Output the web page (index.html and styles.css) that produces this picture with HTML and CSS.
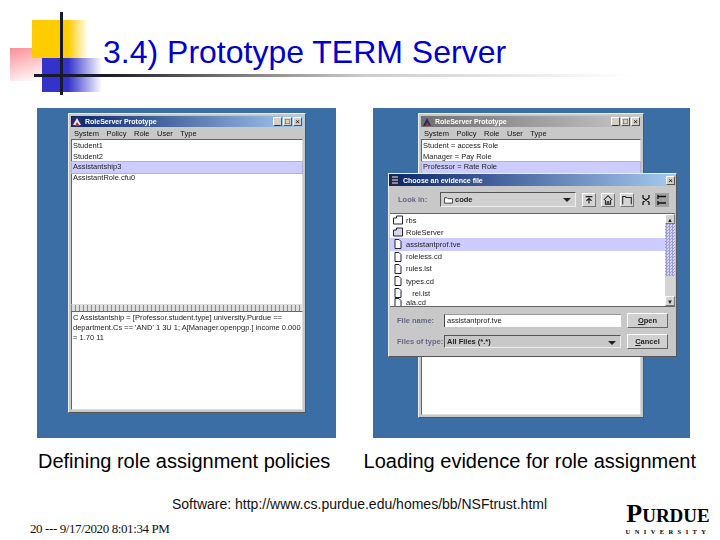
FILE: index.html
```html
<!DOCTYPE html>
<html lang="en">
<head>
    <meta charset="UTF-8">
    <title>3.4) Prototype TERM Server</title>
    <link rel="stylesheet" href="styles.css">
</head>
<body>
<div class="slide">
    <!-- corner decoration -->
    <div class="deco">
        <div class="deco-pink"></div>
        <div class="deco-yellow"></div>
        <div class="deco-blue"></div>
        <div class="deco-vline"></div>
    </div>
    <div class="deco-hline"></div>

    <h1 class="title">3.4) Prototype TERM Server</h1>

    <div class="shots">
        <div class="panel panel-left">
            <div class="win">
                <div class="titlebar">
                    <svg class="app-icon" viewBox="0 0 10 10"><rect width="10" height="10" fill="#2a2a66"/><path d="M1 8L5 1l4 7z" fill="#e8e8f0"/><path d="M3 9l2-4 3 4z" fill="#b03030"/></svg>
                    <span class="titlebar-text">RoleServer Prototype</span>
                    <span class="winbtn">_</span><span class="winbtn">□</span><span class="winbtn">×</span>
                </div>
                <div class="menubar"><span>System</span><span>Policy</span><span>Role</span><span>User</span><span>Type</span></div>
                <div class="list list-top">
                    <div class="row">Student1</div>
                    <div class="row">Student2</div>
                    <div class="row row-sel">Assistantship3</div>
                    <div class="row">AssistantRole.cfu0</div>
                </div>
                <div class="divider"></div>
                <div class="list list-bottom">
                    <div class="note">C Assistantship = [Professor.student.type] university.Purdue ==<br>department.Cs == 'AND' 1 3U 1; A[Manager.openpgp.] income 0.000<br>= 1.70 11</div>
                </div>
            </div>
        </div>

        <div class="panel panel-right">
            <div class="win win-back">
                <div class="titlebar titlebar-grey">
                    <svg class="app-icon" viewBox="0 0 10 10"><path d="M1 9L5 1l4 8z" fill="#222a66"/><path d="M3 9l2-4 3 4z" fill="#a03040"/></svg>
                    <span class="titlebar-text">RoleServer Prototype</span>
                    <span class="winbtn">_</span><span class="winbtn">□</span><span class="winbtn">×</span>
                </div>
                <div class="menubar"><span>System</span><span>Policy</span><span>Role</span><span>User</span><span>Type</span></div>
                <div class="list list-back">
                    <div class="row">Student = access Role</div>
                    <div class="row">Manager = Pay Role</div>
                    <div class="row row-sel">Professor = Rate Role</div>
                </div>
            </div>

            <div class="dialog">
                <div class="titlebar dialog-title">
                    <svg class="app-icon" viewBox="0 0 10 10"><rect width="10" height="10" fill="#22264a"/><path d="M2 2h6M2 5h6M2 8h6" stroke="#eee" stroke-width="1.2"/></svg>
                    <span class="titlebar-text">Choose an evidence file</span>
                    <span class="winbtn">×</span>
                </div>
                <div class="lookin">
                    <span class="field-label">Look in:</span>
                    <div class="combo">
                        <svg class="folder" viewBox="0 0 10 8"><path d="M.5 7.5v-6h3l1 1h5v5z" fill="#fff" stroke="#333"/></svg>
                        <span>code</span><i class="arrow"></i>
                    </div>
                    <span class="tool"><svg viewBox="0 0 14 14"><path d="M3 3h8M7 11V5M4 8l3-3 3 3" fill="none" stroke="#222" stroke-width="1.4"/></svg></span>
                    <span class="tool"><svg viewBox="0 0 14 14"><path d="M2 7l5-5 5 5M4 7v5h6V7M6 12V9h2v3" fill="none" stroke="#222" stroke-width="1.2"/></svg></span>
                    <span class="tool"><svg viewBox="0 0 14 14"><path d="M2 12V3h3l1 1h6v8" fill="none" stroke="#222" stroke-width="1.2"/></svg></span>
                    <span class="tool tool-flat"><svg viewBox="0 0 14 14"><path d="M4 2v3M10 2v3M4 9v3M10 9v3M4 5l6 4M10 5l-6 4" fill="none" stroke="#111" stroke-width="1.3"/></svg></span>
                    <span class="tool tool-flat tool-on"><svg viewBox="0 0 14 14"><path d="M3 2v4M3 8v4M3 3.5h8M3 10h8" fill="none" stroke="#111" stroke-width="1.3"/></svg></span>
                </div>
                <div class="filepane">
                    <div class="files">
                        <div class="file"><svg class="file-ico" viewBox="0 0 10 10"><path d="M.5 9V3h3V1h6v8z" fill="#fff" stroke="#223"/></svg>rbs</div>
                        <div class="file"><svg class="file-ico" viewBox="0 0 10 10"><path d="M.5 9V3h3V1h6v8z" fill="#d8d8e8" stroke="#223"/></svg>RoleServer</div>
                        <div class="file file-sel"><svg class="file-ico" viewBox="0 0 10 10"><path d="M2 .5h4l2 2v7H2z" fill="#fff" stroke="#223"/></svg>assistantprof.tve</div>
                        <div class="file"><svg class="file-ico" viewBox="0 0 10 10"><path d="M2 .5h4l2 2v7H2z" fill="#fff" stroke="#223"/></svg>roleless.cd</div>
                        <div class="file"><svg class="file-ico" viewBox="0 0 10 10"><path d="M2 .5h4l2 2v7H2z" fill="#fff" stroke="#223"/></svg>rules.lst</div>
                        <div class="file"><svg class="file-ico" viewBox="0 0 10 10"><path d="M2 .5h4l2 2v7H2z" fill="#fff" stroke="#223"/></svg>types.cd</div>
                        <div class="file"><svg class="file-ico" viewBox="0 0 10 10"><path d="M2 .5h4l2 2v7H2z" fill="#fff" stroke="#223"/></svg>   rel.lst</div>
                        <div class="file file-last"><svg class="file-ico" viewBox="0 0 10 10"><path d="M2 .5h4l2 2v7H2z" fill="#fff" stroke="#223"/></svg>ala.cd</div>
                    </div>
                    <div class="scroll">
                        <span class="scroll-btn">▲</span>
                        <span class="scroll-thumb"></span>
                        <span class="scroll-track"></span>
                        <span class="scroll-btn">▼</span>
                    </div>
                </div>
                <div class="form-row">
                    <span class="form-label">File name:</span>
                    <div class="input">assistantprof.tve</div>
                    <div class="btn"><u>O</u>pen</div>
                </div>
                <div class="form-row">
                    <span class="form-label">Files of type:</span>
                    <div class="input input-combo">All Files (*.*)<i class="arrow"></i></div>
                    <div class="btn"><u>C</u>ancel</div>
                </div>
            </div>
        </div>
    </div>

    <div class="captions">
        <p class="cap-left">Defining role assignment policies</p>
        <p class="cap-right">Loading evidence for role assignment</p>
    </div>

    <p class="software">Software: http://www.cs.purdue.edu/homes/bb/NSFtrust.html</p>

    <div class="bottom">
        <span class="stamp">20 --- 9/17/2020 8:01:34 PM</span>
        <div class="purdue">
            <div class="purdue-name">P<small>URDUE</small></div>
            <div class="purdue-sub">UNIVERSITY</div>
        </div>
    </div>
</div>
</body>
</html>
```

FILE: styles.css
```css
* {
    box-sizing: border-box;
}

html, body {
    margin: 0;
    padding: 0;
    background: #fff;
}

.slide {
    position: relative;
    width: 720px;
    height: 540px;
    overflow: hidden;
    font-family: "Liberation Sans", Arial, sans-serif;
}

/* corner decoration */
.deco {
    position: absolute;
    left: 0;
    top: 0;
    width: 110px;
    height: 100px;
}

.deco-pink {
    position: absolute;
    left: 10px;
    top: 48px;
    width: 34px;
    height: 33px;
    background: linear-gradient(165deg, #fb8f98 0%, #fdc8cc 50%, #fff 100%);
}

.deco-yellow {
    position: absolute;
    left: 32px;
    top: 20px;
    width: 56px;
    height: 38px;
    background: linear-gradient(90deg, #ffcc00 0, #ffcc00 36px, #fff 100%);
}

.deco-blue {
    position: absolute;
    left: 42px;
    top: 58px;
    width: 60px;
    height: 34px;
    background: linear-gradient(90deg, #3333cc 0, #3333cc 26px, #fff 100%);
}

.deco-vline {
    position: absolute;
    left: 60px;
    top: 12px;
    width: 3px;
    height: 83px;
    background: #1a1a2e;
}

.deco-hline {
    position: absolute;
    left: 34px;
    top: 74px;
    width: 600px;
    height: 3px;
    background: linear-gradient(90deg, #1a1a2e 0, #1a1a2e 12%, #777 33%, #ccc 55%, #fff 100%);
}

.title {
    position: absolute;
    left: 103px;
    top: 34px;
    margin: 0;
    font-size: 32px;
    line-height: 36px;
    font-weight: normal;
    color: #0000cc;
    white-space: nowrap;
}

/* screenshots */
.shots {
    position: absolute;
    left: 37px;
    top: 108px;
    display: flex;
    gap: 37px;
}

.panel {
    position: relative;
    height: 330px;
    background: #3a6ea5;
}

.panel-left {
    width: 299px;
    padding: 5px 30px 0 31px;
}

.panel-right {
    width: 317px;
    padding: 5px 46px 0 45px;
}

.win {
    display: flex;
    flex-direction: column;
    height: 300px;
    padding: 2px;
    background: #c8c8c8;
    border: 1px solid #eee;
    border-right-color: #555;
    border-bottom-color: #555;
    filter: blur(0.35px);
}

.win-back {
    height: 305px;
}

.titlebar {
    display: flex;
    align-items: center;
    gap: 1px;
    height: 11px;
    padding: 0 1px;
    flex: none;
    color: #fff;
    background: linear-gradient(90deg, #0a246a, #a6caf0);
}

.titlebar-grey {
    background: linear-gradient(90deg, #707070, #c8c8c8);
}

.titlebar-text {
    flex: 1;
    margin-left: 2px;
    font-size: 7px;
    font-weight: bold;
    white-space: nowrap;
}

.app-icon {
    width: 10px;
    height: 10px;
    flex: none;
}

.winbtn {
    width: 9px;
    height: 9px;
    flex: none;
    font-size: 8px;
    line-height: 8px;
    text-align: center;
    color: #000;
    background: #d4d0c8;
    border: 1px solid #fff;
    border-right-color: #555;
    border-bottom-color: #555;
}

.menubar {
    display: flex;
    gap: 7.5px;
    height: 12px;
    flex: none;
    padding-left: 3px;
    font-size: 7.5px;
    line-height: 13px;
    color: #111;
}

.list {
    background: #fff;
    border: 1px solid #666;
    border-right-color: #ddd;
    border-bottom-color: #ddd;
    font-size: 7.5px;
    color: #222;
}

.list-top {
    height: 167px;
    padding-top: 1px;
}

.list-back {
    flex: 1;
    padding-top: 1px;
}

.list-bottom {
    height: 99px;
    padding: 1px;
}

.row {
    height: 10.6px;
    line-height: 10.6px;
    padding-left: 1px;
    white-space: nowrap;
}

.row-sel {
    background: #ccccff;
    box-shadow: 0 0 0 1px #b0b0d8;
}

.note {
    line-height: 10px;
    white-space: nowrap;
    overflow: hidden;
}

.divider {
    height: 6px;
    flex: none;
    background: repeating-linear-gradient(90deg, #888 0, #888 1px, #ddd 1px, #ddd 4px);
}

/* file chooser over the window */
.dialog {
    position: absolute;
    left: 15px;
    top: 65px;
    width: 289px;
    height: 184px;
    background: #c8c8c8;
    border: 1px solid #eee;
    border-right-color: #555;
    border-bottom-color: #555;
    color: #222;
    filter: blur(0.35px);
}

.dialog-title {
    height: 12px;
    background: linear-gradient(90deg, #0a246a, #a6caf0);
}

.lookin {
    display: flex;
    align-items: center;
    gap: 5px;
    height: 27px;
    padding: 0 4px 0 9px;
}

.field-label {
    width: 37px;
    font-size: 7.5px;
    font-weight: bold;
    color: #666688;
}

.combo {
    position: relative;
    display: flex;
    align-items: center;
    gap: 2px;
    width: 136px;
    height: 15px;
    padding-left: 3px;
    margin-right: 1px;
    font-size: 7.5px;
    font-weight: bold;
    background: #d0d0d0;
    border: 1px solid #555;
    border-right-color: #eee;
    border-bottom-color: #eee;
}

.folder {
    width: 9px;
    height: 8px;
}

.arrow {
    position: absolute;
    right: 4px;
    top: 5px;
    border-left: 4px solid transparent;
    border-right: 4px solid transparent;
    border-top: 4px solid #222;
}

.tool {
    width: 14px;
    height: 14px;
    flex: none;
    background: #d4d4d4;
    border: 1px solid #fff;
    border-right-color: #777;
    border-bottom-color: #777;
}

.tool svg {
    display: block;
    width: 100%;
    height: 100%;
}

.tool-flat {
    border: 0;
    background: none;
}

.tool-on {
    background: #a0a0a0;
    margin-left: -3px;
}

.filepane {
    display: flex;
    height: 94px;
    margin: 0 1px;
    border-top: 1px solid #666;
    border-bottom: 1px solid #666;
    background: #fff;
}

.files {
    flex: 1;
    overflow: hidden;
    font-size: 7.5px;
}

.file {
    display: flex;
    align-items: center;
    gap: 3px;
    height: 12.2px;
    padding-left: 3px;
    white-space: pre;
}

.file-last {
    height: 7px;
}

.file-sel {
    background: #ccccff;
}

.file-ico {
    width: 10px;
    height: 10px;
    flex: none;
}

.scroll {
    display: flex;
    flex-direction: column;
    width: 10px;
    background: #d4d4d4;
}

.scroll-btn {
    height: 10px;
    font-size: 6px;
    line-height: 10px;
    text-align: center;
    background: #d4d4d4;
    border: 1px solid #fff;
    border-right-color: #777;
    border-bottom-color: #777;
}

.scroll-thumb {
    height: 52px;
    background: repeating-conic-gradient(#9c9cd8 0 25%, #d8d8f0 0 50%) 0 0 / 3px 3px;
}

.scroll-track {
    flex: 1;
}

.form-row {
    display: flex;
    align-items: center;
    height: 21px;
    padding-left: 8px;
    font-size: 7.5px;
}

.filepane + .form-row {
    margin-top: 3px;
}

.form-label {
    width: 47px;
    color: #666688;
    font-weight: bold;
}

.input {
    position: relative;
    width: 177px;
    height: 13px;
    line-height: 12px;
    padding-left: 2px;
    background: #fff;
    border-left: 1px solid #444;
    border-top: 1px solid #999;
}

.input-combo {
    font-weight: bold;
    background: #c8c8c8;
    border: 1px solid #555;
    border-right-color: #eee;
    border-bottom-color: #eee;
}

.btn {
    width: 41px;
    height: 15px;
    margin-left: 6px;
    line-height: 13px;
    text-align: center;
    font-weight: bold;
    background: #d0d0d0;
    border: 1px solid #fff;
    border-right-color: #666;
    border-bottom-color: #666;
}

/* text under the screenshots */
.captions {
    position: absolute;
    left: 38px;
    top: 450px;
    width: 658px;
    display: flex;
    justify-content: space-between;
}

.captions p {
    margin: 0;
    font-size: 20px;
    line-height: 22px;
    color: #000;
    white-space: nowrap;
}

.software {
    position: absolute;
    left: 172px;
    top: 496px;
    margin: 0;
    font-size: 14px;
    line-height: 16px;
    color: #111;
    white-space: nowrap;
}

.bottom {
    position: absolute;
    left: 30px;
    top: 502px;
    width: 681px;
    display: flex;
    justify-content: space-between;
    align-items: flex-end;
}

.stamp {
    font-family: "Liberation Serif", "Times New Roman", serif;
    font-size: 13px;
    line-height: 16px;
    letter-spacing: -0.4px;
    color: #111;
}

.purdue {
    width: 86px;
    margin-bottom: 1px;
    font-family: "Liberation Serif", "Times New Roman", serif;
    color: #000;
    text-align: center;
}

.purdue-name {
    font-size: 26px;
    line-height: 23px;
    font-weight: bold;
    white-space: nowrap;
}

.purdue-name small {
    font-size: 19px;
}

.purdue-sub {
    font-size: 6.5px;
    line-height: 9px;
    letter-spacing: 4.4px;
    font-weight: bold;
    white-space: nowrap;
}
```
